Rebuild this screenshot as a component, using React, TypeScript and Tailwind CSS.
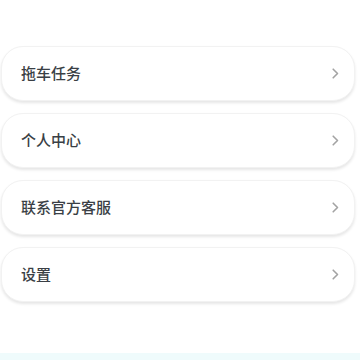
import React from "react";

const items = ["拖车任务", "个人中心", "联系官方客服", "设置"];

const Chevron: React.FC = () => (
  <svg width="7" height="11" viewBox="0 0 7 11" fill="none">
    <path d="M1.2 1.2L5.5 5.5L1.2 9.8" stroke="#a3a3a3" strokeWidth="1.6" strokeLinecap="round" strokeLinejoin="round" />
  </svg>
);

const App: React.FC = () => (
  <div
    className="w-[360px] h-[360px] bg-white overflow-hidden flex flex-col"
    style={{ fontFamily: '"Noto Sans CJK SC", "Noto Sans", sans-serif' }}
  >
    <div className="flex-1 flex flex-col gap-[12px] pt-[46px] pl-[1px] pr-[5px]">
      {items.map((label) => (
        <div
          key={label}
          className="h-[55px] flex items-center justify-between rounded-[22px] bg-white border border-[#f2f2f2] shadow-[0_2px_3px_rgba(0,0,0,0.10)] pl-[19px] pr-[15px]"
        >
          <span className="text-[15px] font-medium text-[#3a3f45]">{label}</span>
          <Chevron />
        </div>
      ))}
    </div>
    <div className="h-[7px] bg-[#effbfc]" />
  </div>
);

export default App;
